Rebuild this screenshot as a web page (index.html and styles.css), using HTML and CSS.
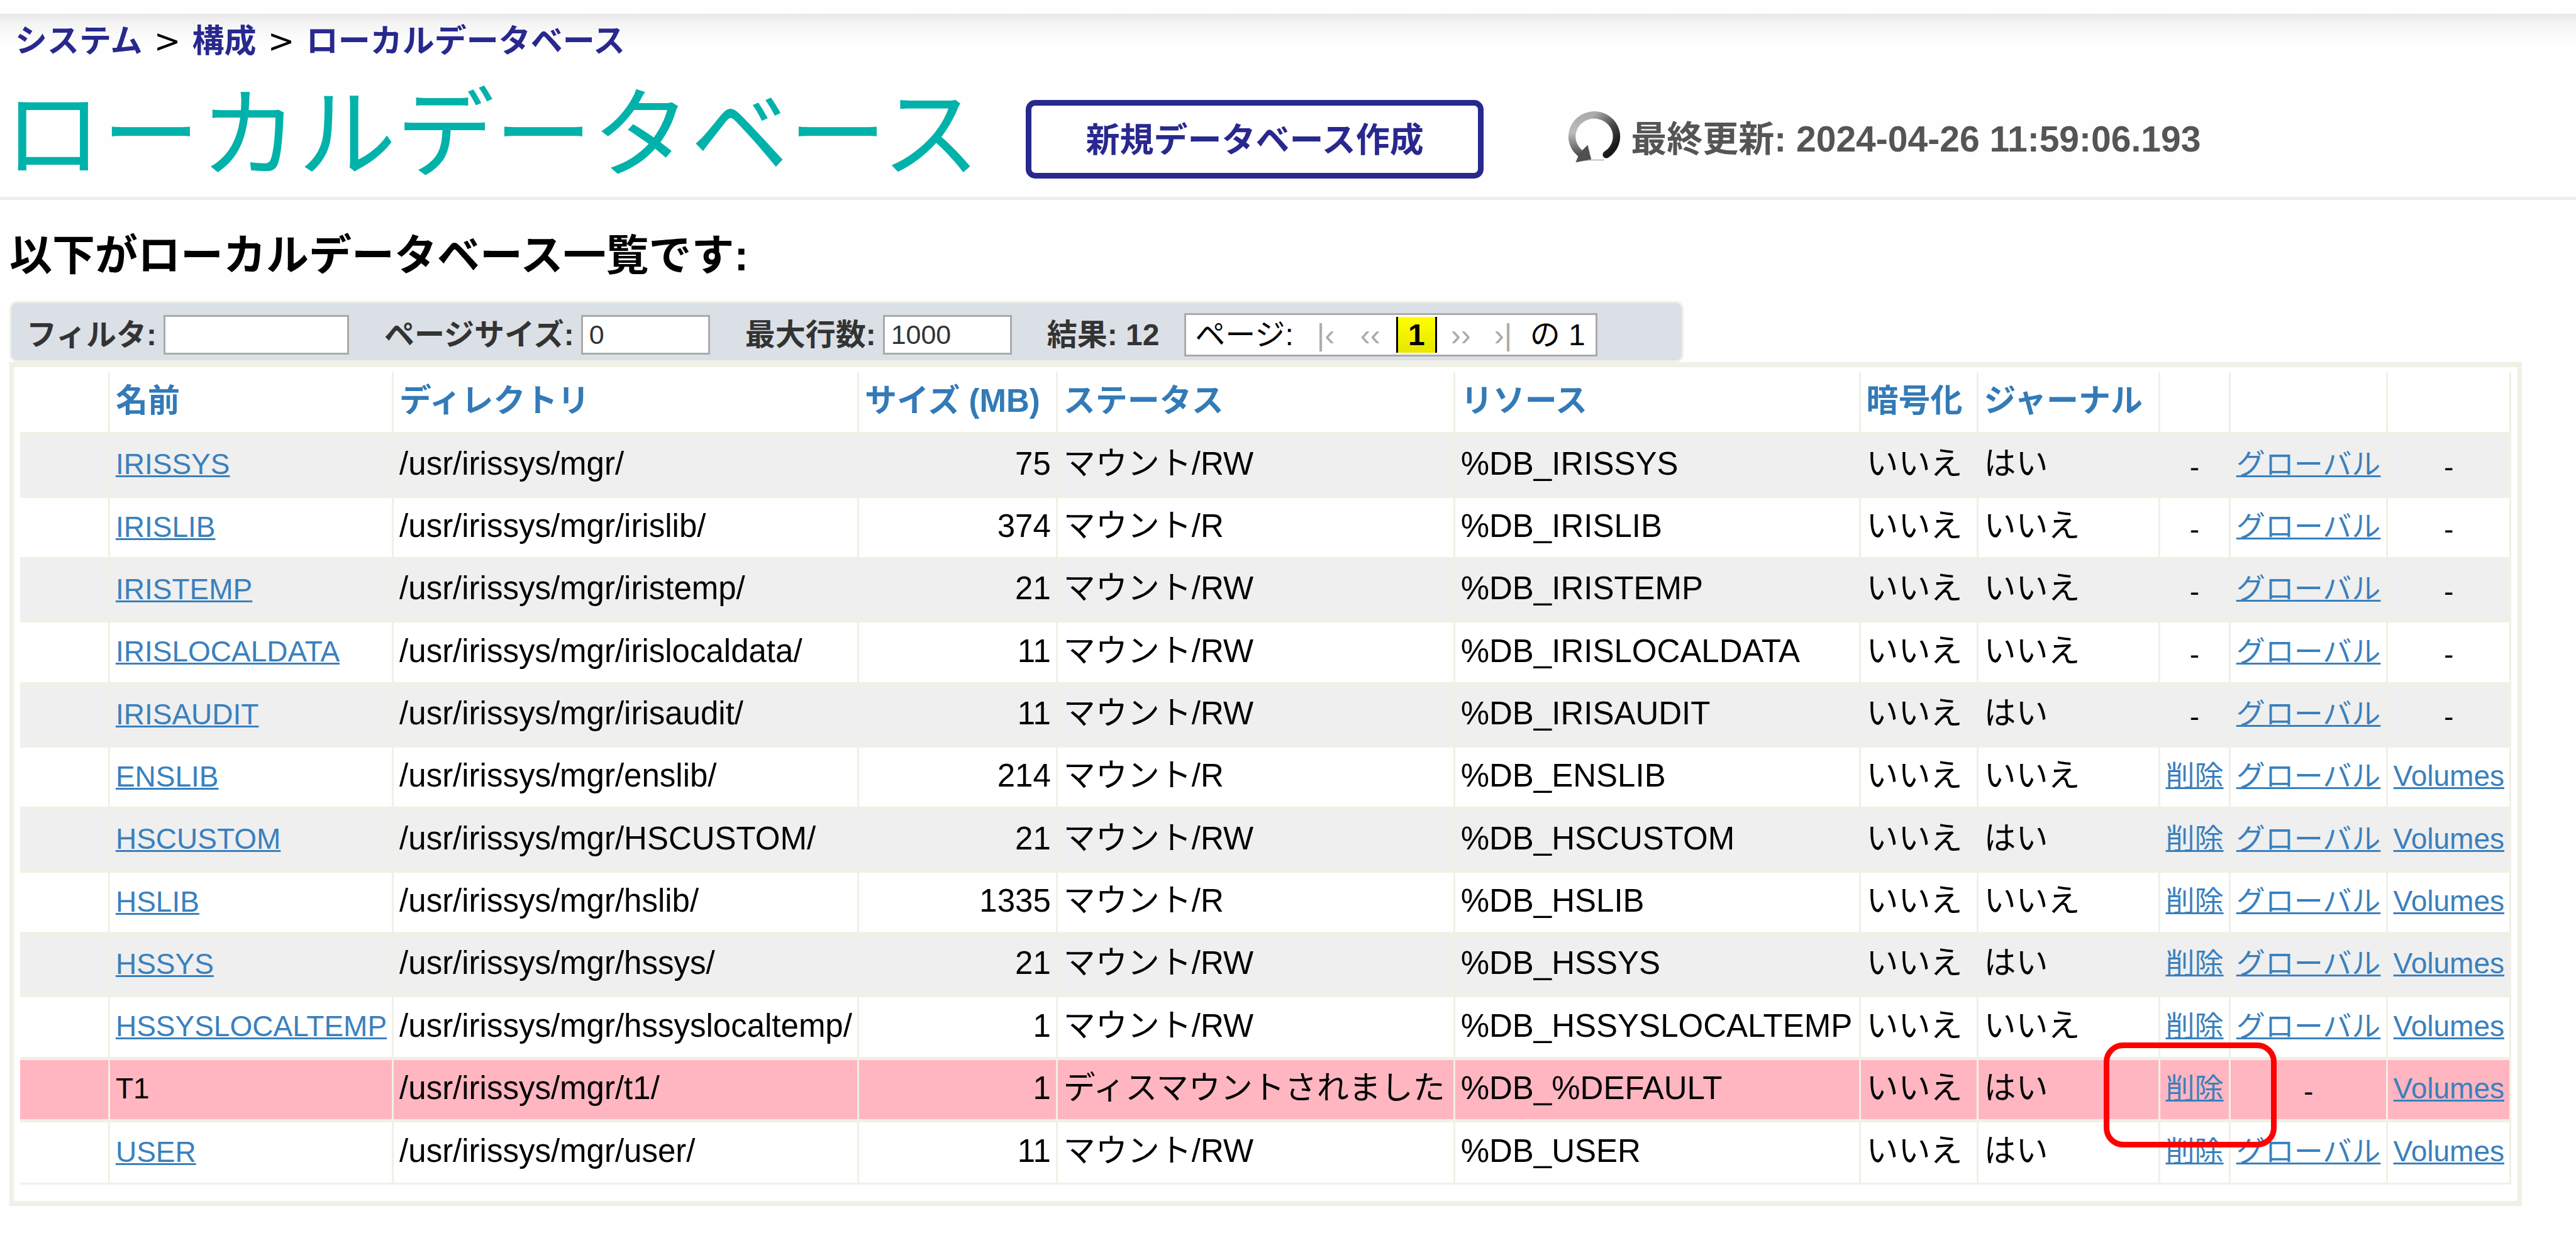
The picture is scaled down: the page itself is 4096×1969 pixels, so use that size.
FILE: index.html
```html
<!DOCTYPE html>
<html lang="ja">
<head>
<meta charset="utf-8">
<title>ローカルデータベース</title>
<link rel="stylesheet" href="styles.css">
</head>
<body>
<header class="page-header">
  <nav class="breadcrumb">
    <a href="#">システム</a> <span class="separator">&gt;</span> <a href="#">構成</a> <span class="separator">&gt;</span> <a href="#">ローカルデータベース</a>
  </nav>
  <div class="title-bar">
    <h1 class="title">ローカルデータベース</h1>
    <button class="create-button" type="button">新規データベース作成</button>
    <div class="updated">
      <svg class="refresh-icon" viewBox="0 0 92 92" aria-hidden="true">
        <defs>
          <linearGradient id="ring-left" x1="0" y1="0" x2="0" y2="1">
            <stop offset="0" stop-color="#acacac"/>
            <stop offset="0.45" stop-color="#bcbcbc"/>
            <stop offset="1" stop-color="#505050"/>
          </linearGradient>
          <linearGradient id="ring-right" x1="0" y1="0" x2="0.6" y2="1">
            <stop offset="0" stop-color="#acacac"/>
            <stop offset="0.55" stop-color="#4a4a4a"/>
            <stop offset="1" stop-color="#161616"/>
          </linearGradient>
        </defs>
        <path d="M30 81H62" stroke="#d0d0d0" stroke-width="3"/>
        <path d="M46 6A38 36 0 0 0 26 72" fill="none" stroke="url(#ring-left)" stroke-width="12"/>
        <path d="M46 6A38 36 0 0 1 66 72" fill="none" stroke="url(#ring-right)" stroke-width="12" stroke-linecap="round"/>
        <path d="M15 85L41 80L35 56L28 63L20 73Z" fill="#505050"/>
      </svg>
      <span>最終更新: 2024-04-26 11:59:06.193</span>
    </div>
  </div>
</header>

<main class="content">
  <h2 class="lead">以下がローカルデータベース一覧です:</h2>

  <form class="toolbar">
    <div class="field">
      <label for="filter">フィルタ:</label>
      <input class="box box-wide" id="filter" type="text">
    </div>
    <div class="field">
      <label for="page-size">ページサイズ:</label>
      <input class="box" id="page-size" type="text" value="0">
    </div>
    <div class="field">
      <label for="max-rows">最大行数:</label>
      <input class="box" id="max-rows" type="text" value="1000">
    </div>
    <div class="field">結果: 12</div>
    <div class="pager">
      <span class="pager-label">ページ:</span>
      <span class="step">|‹</span>
      <span class="step">‹‹</span>
      <span class="current">1</span>
      <span class="step">››</span>
      <span class="step">›|</span>
      <span class="total">の 1</span>
    </div>
  </form>

  <div class="panel">
    <table class="databases">
      <thead>
        <tr>
          <th class="col-marker"></th>
          <th><a href="#">名前</a></th>
          <th><a href="#">ディレクトリ</a></th>
          <th class="col-size"><a href="#">サイズ (MB)</a></th>
          <th class="col-status"><a href="#">ステータス</a></th>
          <th class="col-resource"><a href="#">リソース</a></th>
          <th class="col-encrypted"><a href="#">暗号化</a></th>
          <th class="col-journal"><a href="#">ジャーナル</a></th>
          <th></th>
          <th class="col-globals"></th>
          <th></th>
        </tr>
      </thead>
      <tbody>
        <tr><td></td><td><a href="#">IRISSYS</a></td><td>/usr/irissys/mgr/</td><td class="num">75</td><td>マウント/RW</td><td>%DB_IRISSYS</td><td>いいえ</td><td>はい</td><td class="act">-</td><td class="act"><a href="#">グローバル</a></td><td class="act">-</td></tr>
        <tr><td></td><td><a href="#">IRISLIB</a></td><td>/usr/irissys/mgr/irislib/</td><td class="num">374</td><td>マウント/R</td><td>%DB_IRISLIB</td><td>いいえ</td><td>いいえ</td><td class="act">-</td><td class="act"><a href="#">グローバル</a></td><td class="act">-</td></tr>
        <tr><td></td><td><a href="#">IRISTEMP</a></td><td>/usr/irissys/mgr/iristemp/</td><td class="num">21</td><td>マウント/RW</td><td>%DB_IRISTEMP</td><td>いいえ</td><td>いいえ</td><td class="act">-</td><td class="act"><a href="#">グローバル</a></td><td class="act">-</td></tr>
        <tr><td></td><td><a href="#">IRISLOCALDATA</a></td><td>/usr/irissys/mgr/irislocaldata/</td><td class="num">11</td><td>マウント/RW</td><td>%DB_IRISLOCALDATA</td><td>いいえ</td><td>いいえ</td><td class="act">-</td><td class="act"><a href="#">グローバル</a></td><td class="act">-</td></tr>
        <tr><td></td><td><a href="#">IRISAUDIT</a></td><td>/usr/irissys/mgr/irisaudit/</td><td class="num">11</td><td>マウント/RW</td><td>%DB_IRISAUDIT</td><td>いいえ</td><td>はい</td><td class="act">-</td><td class="act"><a href="#">グローバル</a></td><td class="act">-</td></tr>
        <tr><td></td><td><a href="#">ENSLIB</a></td><td>/usr/irissys/mgr/enslib/</td><td class="num">214</td><td>マウント/R</td><td>%DB_ENSLIB</td><td>いいえ</td><td>いいえ</td><td class="act"><a href="#">削除</a></td><td class="act"><a href="#">グローバル</a></td><td class="act"><a href="#">Volumes</a></td></tr>
        <tr><td></td><td><a href="#">HSCUSTOM</a></td><td>/usr/irissys/mgr/HSCUSTOM/</td><td class="num">21</td><td>マウント/RW</td><td>%DB_HSCUSTOM</td><td>いいえ</td><td>はい</td><td class="act"><a href="#">削除</a></td><td class="act"><a href="#">グローバル</a></td><td class="act"><a href="#">Volumes</a></td></tr>
        <tr><td></td><td><a href="#">HSLIB</a></td><td>/usr/irissys/mgr/hslib/</td><td class="num">1335</td><td>マウント/R</td><td>%DB_HSLIB</td><td>いいえ</td><td>いいえ</td><td class="act"><a href="#">削除</a></td><td class="act"><a href="#">グローバル</a></td><td class="act"><a href="#">Volumes</a></td></tr>
        <tr><td></td><td><a href="#">HSSYS</a></td><td>/usr/irissys/mgr/hssys/</td><td class="num">21</td><td>マウント/RW</td><td>%DB_HSSYS</td><td>いいえ</td><td>はい</td><td class="act"><a href="#">削除</a></td><td class="act"><a href="#">グローバル</a></td><td class="act"><a href="#">Volumes</a></td></tr>
        <tr><td></td><td><a href="#">HSSYSLOCALTEMP</a></td><td>/usr/irissys/mgr/hssyslocaltemp/</td><td class="num">1</td><td>マウント/RW</td><td>%DB_HSSYSLOCALTEMP</td><td>いいえ</td><td>いいえ</td><td class="act"><a href="#">削除</a></td><td class="act"><a href="#">グローバル</a></td><td class="act"><a href="#">Volumes</a></td></tr>
        <tr class="dismounted"><td></td><td class="plain-name">T1</td><td>/usr/irissys/mgr/t1/</td><td class="num">1</td><td>ディスマウントされました</td><td>%DB_%DEFAULT</td><td>いいえ</td><td>はい</td><td class="act marked"><a href="#">削除</a><span class="callout"></span></td><td class="act">-</td><td class="act"><a href="#">Volumes</a></td></tr>
        <tr><td></td><td><a href="#">USER</a></td><td>/usr/irissys/mgr/user/</td><td class="num">11</td><td>マウント/RW</td><td>%DB_USER</td><td>いいえ</td><td>はい</td><td class="act"><a href="#">削除</a></td><td class="act"><a href="#">グローバル</a></td><td class="act"><a href="#">Volumes</a></td></tr>
      </tbody>
    </table>
  </div>
</main>
</body>
</html>
```
FILE: styles.css
```css
* {
  box-sizing: border-box;
}

body {
  margin: 0;
  background: #fefefe;
  color: #000;
  font-family: "Liberation Sans", "Noto Sans CJK JP", sans-serif;
  font-size: 51px;
  line-height: 60px;
  white-space: nowrap;
}

/* Header */
.page-header {
  margin-top: 22px;
  padding-top: 14px;
  border-bottom: 5px solid #eee;
  background: linear-gradient(#e8e8e8, #f4f4f4 16px, #fefefe 48px);
}

.breadcrumb {
  padding-left: 24px;
}

.breadcrumb a {
  color: #28288e;
  font-weight: bold;
  text-decoration: none;
}

.separator {
  margin: 0 4px;
  font-family: "DejaVu Sans", sans-serif;
  line-height: 1;
}

.title-bar {
  display: flex;
  align-items: center;
  height: 217px;
  padding: 34px 0 0 6px;
}

.title {
  margin: 0;
  padding-bottom: 14px;
  color: #00b2a9;
  font-size: 156px;
  font-weight: normal;
  line-height: 170px;
}

.create-button {
  width: 728px;
  height: 125px;
  margin: 0 132px 0 73px;
  padding: 0 6px 6px;
  border: 9px solid #28288e;
  border-radius: 15px;
  background: #fff;
  color: #28288e;
  font-family: inherit;
  font-size: 54px;
  font-weight: bold;
}

.updated {
  display: flex;
  align-items: center;
  gap: 14px;
  padding-bottom: 2px;
  color: #555;
  font-size: 57px;
  font-weight: bold;
}

.refresh-icon {
  width: 88px;
  height: 88px;
}

/* Content */
.content {
  padding: 48px 86px 0 15px;
}

.lead {
  margin: 0 0 33px;
  font-size: 68px;
  line-height: 80px;
}

.toolbar {
  display: flex;
  align-items: center;
  width: fit-content;
  height: 97px;
  padding: 10px 134px 0 24px;
  border: 3px solid #f0f0e6;
  border-radius: 12px;
  background: #dae0e6;
  color: #333;
  font-size: 48px;
  font-weight: bold;
}

.field {
  display: flex;
  align-items: center;
  gap: 11px;
  margin-right: 56px;
}

.field:nth-child(4) {
  margin-right: 40px;
}

.box {
  width: 205px;
  height: 63px;
  padding: 0 10px;
  border: 3px solid #aaa;
  border-radius: 0;
  background: #fff;
  color: #333;
  font-family: inherit;
  font-size: 43px;
}

.box-wide {
  width: 295px;
}

.pager {
  display: flex;
  align-items: center;
  height: 69px;
  padding: 0 16px 0 14px;
  border: 3px solid #aaa;
  background: #fff;
  color: #000;
  font-weight: normal;
}

.pager-label {
  margin-right: 25px;
}

.step {
  width: 69px;
  padding-left: 12px;
  color: #aaa;
}

.current {
  width: 65px;
  margin-right: 10px;
  border: solid #000;
  border-width: 0 3px;
  background: linear-gradient(#ff0, #e6e600);
  font-weight: bold;
  line-height: 57px;
  text-align: center;
}

.panel {
  width: fit-content;
  padding: 8px 10px 26px;
  border: solid #f0f0e6;
  border-width: 8px 7px;
  background: #fff;
}

/* Database list */
.databases {
  border-spacing: 0;
}

.databases th,
.databases td {
  padding: 0 8px 4px 9px;
  border: solid #f0f0e6;
  border-width: 0 3px 5px 0;
  text-align: left;
}

.databases th {
  height: 100px;
  padding-right: 22px;
}

.databases .col-marker {
  width: 146px;
}

.databases .col-size {
  width: 316px;
}

.databases .col-status {
  width: 632px;
}

.databases .col-resource {
  width: 645px;
}

.databases .col-encrypted {
  width: 187px;
}

.databases .col-journal {
  width: 289px;
}

.databases .col-globals {
  width: 250px;
}

.databases tbody tr {
  height: 99px;
}

.databases tbody tr:nth-child(3n + 1) {
  height: 100px;
}

.databases tbody tr:nth-child(odd) {
  background: #efefef;
}

.databases tbody tr.dismounted {
  background: #ffb6c1;
}

.databases tbody tr:last-child td {
  border-bottom-width: 3px;
}

.databases a {
  color: #337ab7;
}

.databases th a {
  text-decoration: none;
}

.databases td a,
.databases .act,
.databases .plain-name {
  font-size: 46px;
}

.databases td a {
  color: #3a80bd;
  text-decoration-thickness: 3px;
}

.databases .num {
  text-align: right;
}

.databases .act {
  text-align: center;
}

.databases .act:not(:has(a)) {
  padding-top: 10px;
}

.databases .marked {
  position: relative;
}

/* Red frame drawn over the delete link */
.callout {
  position: absolute;
  z-index: 1;
  top: -28px;
  left: -90px;
  width: 275px;
  height: 167px;
  border: 9px solid #f00;
  border-radius: 31px;
  pointer-events: none;
}
```
